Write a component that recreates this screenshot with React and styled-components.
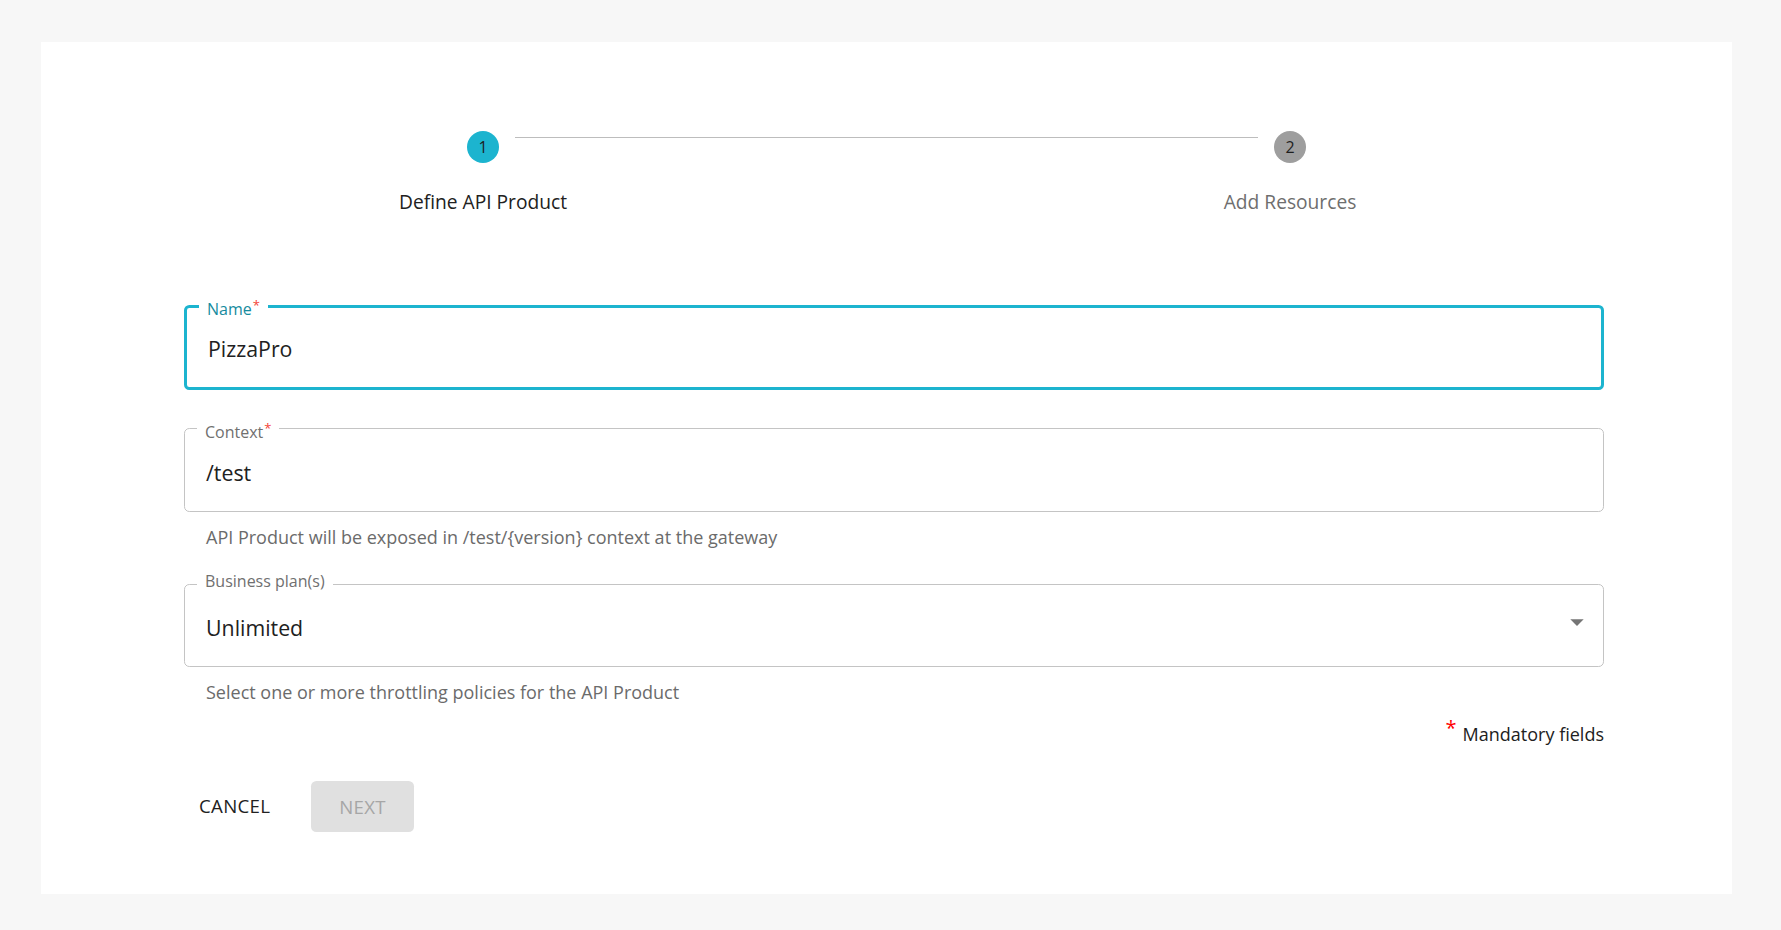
import React from 'react';
import styled, { createGlobalStyle } from 'styled-components';

const GlobalStyle = createGlobalStyle`
  html, body {
    margin: 0;
    padding: 0;
    background: #f7f7f7;
    font-family: 'Open Sans', 'Liberation Sans', sans-serif;
    color: #212121;
  }
  * {
    box-sizing: border-box;
  }
`;

const Page = styled.div`
  padding: 42px 49px 36px 41px;
`;

const Panel = styled.div`
  background: #fff;
  height: 852px;
  padding: 88.67px 0 0 0;
`;

const Stepper = styled.div`
  display: grid;
  grid-template-columns: 1fr 1fr;
  padding: 0 38.5px;
`;

const Step = styled.div`
  display: flex;
  flex-direction: column;
  align-items: center;
`;

const StepHead = styled.div`
  display: flex;
  align-items: flex-start;
  width: 100%;
`;

const Connector = styled.div`
  flex: 1;
  height: 1.33px;
  margin-top: 6.33px;
  background: ${(p) => (p.$show ? '#bdbdbd' : 'transparent')};
  margin-left: ${(p) => (p.$side === 'right' ? '16px' : '0')};
  margin-right: ${(p) => (p.$side === 'left' ? '16px' : '0')};
`;

const StepCircle = styled.div`
  width: 32px;
  height: 32px;
  border-radius: 50%;
  flex: none;
  display: flex;
  align-items: center;
  justify-content: center;
  background: ${(p) => (p.$active ? '#1cb4cf' : '#9e9e9e')};
  color: #1e1e1e;
  font-size: 16px;
  line-height: 16px;
`;

const StepLabel = styled.div`
  margin-top: 26px;
  font-size: 19.2px;
  line-height: 26px;
  color: ${(p) => (p.$active ? '#212121' : '#6e6e6e')};
`;

const Form = styled.div`
  margin: 80.83px 128px 0 143px;
  display: flex;
  flex-direction: column;
`;

const Field = styled.fieldset`
  margin: ${(p) => p.$top}px 0 0 0;
  min-width: 0;
  padding: 0 10px ${(p) => (p.$focused ? 7.5 : 6)}px 12px;
  border: ${(p) => (p.$focused ? '3px solid #1cb4cf' : '1.33px solid #c4c4c4')};
  border-radius: 5.33px;
  background: #fff;
`;

const Legend = styled.legend`
  padding: ${(p) => (p.$required ? '6px 8px 0' : '0 8px 6px')};
  font-size: 16px;
  line-height: 16px;
  color: ${(p) => (p.$focused ? '#168b9e' : '#707070')};

  sup {
    color: #f44336;
    font-size: 13px;
    line-height: 0;
    vertical-align: 5px;
    margin-left: 1px;
  }
`;

const ValueRow = styled.div`
  height: ${(p) => (p.$focused ? 62 : 65)}px;
  display: flex;
  align-items: center;
  justify-content: space-between;
  padding-left: 9px;
  font-size: 21.33px;
  color: #212121;

  svg {
    margin-bottom: 11px;
  }
`;

const Helper = styled.div`
  margin-top: 12px;
  padding-left: 22px;
  font-size: 18px;
  line-height: 26px;
  color: #6b6b6b;
`;

const Mandatory = styled.div`
  margin-top: 15.3px;
  text-align: right;
  font-size: 18px;
  line-height: 26px;
  color: #212121;

  sup {
    color: #f00;
    font-size: 20px;
    line-height: 0;
    vertical-align: 6px;
    margin-right: 6px;
  }
`;

const Actions = styled.div`
  margin-top: 34px;
  display: flex;
  align-items: center;
  gap: 26px;
`;

const Button = styled.button`
  height: 51.67px;
  border: none;
  border-radius: 5.33px;
  font-family: 'Open Sans', 'Liberation Sans', sans-serif;
  font-size: 18.67px;
  letter-spacing: 0.3px;
  text-transform: uppercase;
  cursor: pointer;
  padding: ${(p) => (p.$contained ? '0 28px' : '0 15px 2px')};
  background: ${(p) => (p.$contained ? '#e0e0e0' : 'transparent')};
  color: ${(p) => (p.$disabled ? '#a6a6a6' : '#212121')};
`;

const steps = ['Define API Product', 'Add Resources'];

const DropArrow = () => (
  <svg width="32" height="32" viewBox="0 0 24 24">
    <path d="M7 10l5 5 5-5z" fill="#757575" />
  </svg>
);

const App = () => {
  return (
    <>
      <GlobalStyle />
      <Page>
        <Panel>
          <Stepper>
            {steps.map((label, i) => (
              <Step key={label}>
                <StepHead>
                  <Connector $side="left" $show={i > 0} />
                  <StepCircle $active={i === 0}>{i + 1}</StepCircle>
                  <Connector $side="right" $show={i < steps.length - 1} />
                </StepHead>
                <StepLabel $active={i === 0}>{label}</StepLabel>
              </Step>
            ))}
          </Stepper>

          <Form>
            <Field $top={0} $focused>
              <Legend $focused $required>
                Name<sup>*</sup>
              </Legend>
              <ValueRow $focused>PizzaPro</ValueRow>
            </Field>

            <Field $top={27.67}>
              <Legend $required>
                Context<sup>*</sup>
              </Legend>
              <ValueRow>/test</ValueRow>
            </Field>
            <Helper>API Product will be exposed in /test/{'{version}'} context at the gateway</Helper>

            <Field $top={23.67}>
              <Legend>Business plan(s)</Legend>
              <ValueRow>
                <span>Unlimited</span>
                <DropArrow />
              </ValueRow>
            </Field>
            <Helper>Select one or more throttling policies for the API Product</Helper>

            <Mandatory>
              <sup>*</sup>Mandatory fields
            </Mandatory>

            <Actions>
              <Button>Cancel</Button>
              <Button $contained $disabled disabled>
                Next
              </Button>
            </Actions>
          </Form>
        </Panel>
      </Page>
    </>
  );
};

export default App;
